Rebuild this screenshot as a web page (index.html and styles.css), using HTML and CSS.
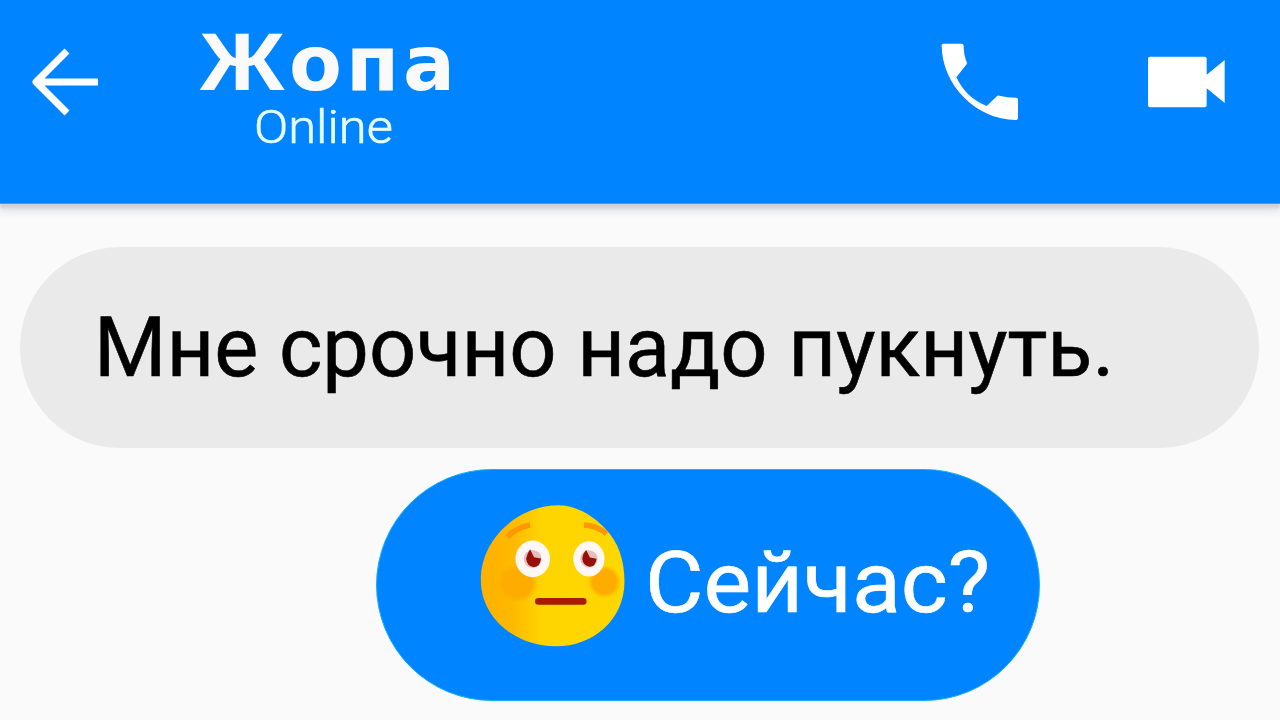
FILE: index.html
```html
<!DOCTYPE html>
<html lang="ru">
<head>
    <meta charset="UTF-8">
    <meta name="viewport" content="width=device-width, initial-scale=1.0">
    <title>Жопа - чат</title>
    <link rel="stylesheet" href="styles.css">
</head>
<body>
    <!-- Шапка чата -->
    <header class="header">
        <svg class="back" viewBox="0 0 70 70">
            <path d="M67 35H6M36 4L5 35L36 66"/>
        </svg>
        <div class="contact">
            <div class="name"><span class="cap">Ж</span>опа</div>
            <div class="status">Online</div>
        </div>
        <div class="actions">
            <svg class="phone" viewBox="0 0 234 234">
                <path d="M2 7Q2 2 7 2H62Q68 2 68 8Q68 37 78 59Q78 63 75 66L46 103C67 145 92 170 137 189L166 161Q170 157 175 158Q198 164 225 164Q231 164 231 170V225Q231 231 225 231C105 231 2 125 2 7Z"/>
            </svg>
            <svg class="video" viewBox="0 0 234 156">
                <path d="M9 2H173Q179 2 179 8V56L233 12V141L179 97V148Q179 154 173 154H9Q3 154 3 148V8Q3 2 9 2Z"/>
            </svg>
        </div>
    </header>

    <!-- Сообщения -->
    <main class="chat">
        <div class="message incoming">Мне срочно надо пукнуть.</div>
        <div class="message outgoing">
            <svg class="emoji" viewBox="60 45 435 427">
                <defs>
                    <linearGradient id="face">
                        <stop offset="0" stop-color="#ffb000"/>
                        <stop offset="0.22" stop-color="#ffb900"/>
                        <stop offset="0.42" stop-color="#ffd400"/>
                        <stop offset="1" stop-color="#ffd800"/>
                    </linearGradient>
                    <radialGradient id="cheek">
                        <stop offset="0" stop-color="#ffac00"/>
                        <stop offset="0.7" stop-color="#ffac00"/>
                        <stop offset="1" stop-color="#ffac00" stop-opacity="0"/>
                    </radialGradient>
                </defs>
                <path fill="url(#face)" d="M295 46C350 46 400 78 435 115C475 155 494 210 494 275C494 390 400 470 288 470C165 470 62 385 62 270C62 145 175 46 295 46Z"/>
                <ellipse cx="172" cy="280" rx="62" ry="58" fill="url(#cheek)"/>
                <ellipse cx="434" cy="276" rx="50" ry="50" fill="url(#cheek)"/>
                <path class="brow" d="M142 141Q170 112 210 105M372 105Q410 106 440 132"/>
                <ellipse cx="218" cy="207" rx="52" ry="55" fill="#fff6f6"/>
                <ellipse cx="387" cy="207" rx="47" ry="53" fill="#fff6f6"/>
                <circle cx="218" cy="207" r="27" fill="#e3c0bd"/>
                <circle cx="387" cy="207" r="26" fill="#e3c0bd"/>
                <path fill="#980f08" d="M210 178L222 202L243 206Q240 232 221 232Q201 230 198 207Q202 190 210 178ZM379 180L390 203L410 207Q407 231 389 231Q369 228 367 207Q369 189 379 180Z"/>
                <path class="mouth" d="M235 335H370"/>
            </svg>
            <span class="reply">Сейчас?</span>
        </div>
    </main>
</body>
</html>
```

FILE: styles.css
```css
:root {
    --blue: #0084ff;
    --grey: #eaeaea;
    --bg: #fafafa;
}

* {
    box-sizing: border-box;
}

body {
    margin: 0;
    height: 720px;
    overflow: hidden;
    background: var(--bg);
    font-family: Roboto, "Noto Sans", sans-serif;
}

/* Шапка */
.header {
    display: flex;
    align-items: flex-start;
    height: 204px;
    padding: 32px 55px 0 31px;
    background: var(--blue);
    border-bottom: 1px solid #32a5dc;
    box-shadow: 0 4px 3px #d3cfcf, 0 7px 9px #dcdfe2;
    color: white;
}

.back {
    width: 70px;
    height: 70px;
    margin-top: 15px;
    fill: none;
    stroke: white;
    stroke-width: 7;
    stroke-linejoin: round;
}

.contact {
    width: 260px;
    margin-left: 99px;
    white-space: nowrap;
}

.name {
    font: bold 77px/60px "DejaVu Sans", Verdana, sans-serif;
    letter-spacing: 4px;
    color: #fafafa;
}

.cap {
    display: inline-block;
    width: 89px;
    font-family: "Liberation Sans", Arial, sans-serif;
    font-size: 81px;
    letter-spacing: 0;
    transform: scaleX(1.15);
    transform-origin: left;
}

.status {
    margin-left: 54px;
    font-size: 46px;
    font-weight: 300;
    line-height: 66px;
    color: #e8ffff;
    -webkit-text-stroke: 0.6px #e8ffff;
    transform: scaleX(1.1);
    transform-origin: left;
}

.actions {
    display: flex;
    gap: 128px;
    margin-left: auto;
    fill: white;
}

.phone {
    width: 78px;
    height: 78px;
    margin-top: 11px;
}

.video {
    width: 78px;
    height: 52px;
    margin-top: 24px;
}

/* Сообщения */
.chat {
    display: flex;
    flex-direction: column;
    gap: 21px;
    padding: 43px 21px 0 20px;
}

.message {
    display: flex;
    align-items: center;
    white-space: nowrap;
}

.incoming {
    height: 201px;
    padding: 0 0 0 74px;
    border-radius: 100px;
    background: var(--grey);
    color: black;
    font-size: 83px;
    -webkit-text-stroke: 0.6px black;
}

.outgoing {
    width: 664px;
    height: 232px;
    margin-left: 356px;
    padding: 0 0 6px 103px;
    border: 1px solid #18b0f5;
    border-radius: 116px;
    background: var(--blue);
    color: white;
    font-size: 86px;
    -webkit-text-stroke: 0.6px white;
}

.reply {
    transform: scaleX(1.045);
    transform-origin: left;
}

.emoji {
    width: 145px;
    height: 142px;
    margin: -12px 20px 0 0;
}

.brow {
    fill: none;
    stroke: #ff9800;
    stroke-width: 17;
}

.mouth {
    fill: none;
    stroke: #a81b00;
    stroke-width: 20;
    stroke-linecap: round;
}
```
